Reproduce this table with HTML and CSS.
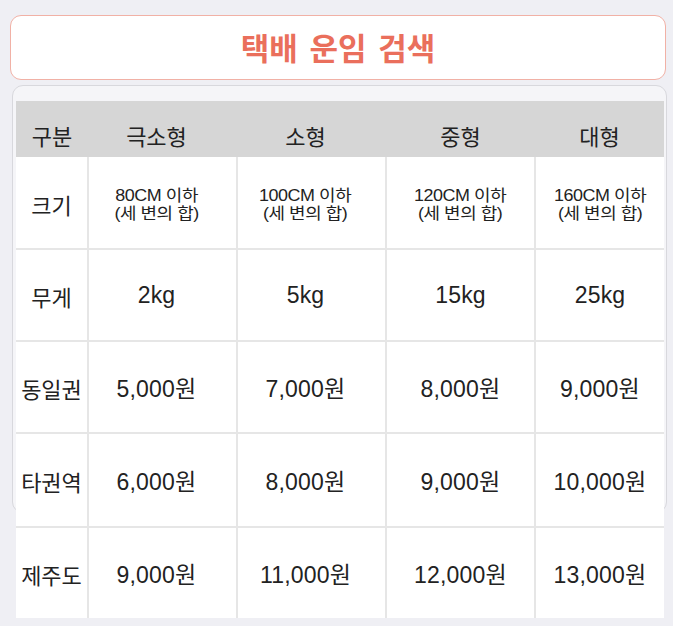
FILE: index.html
```html
<!DOCTYPE html>
<html lang="ko">
<head>
<meta charset="utf-8">
<title>택배 운임 검색</title>
<link rel="stylesheet" href="styles.css">
</head>
<body>
<div class="page">
  <div class="title-btn">택배 운임 검색</div>
  <div class="card">
    <table class="rates">
      <colgroup>
        <col class="c-label">
        <col class="c-data">
        <col class="c-data">
        <col class="c-data">
        <col class="c-last">
      </colgroup>
      <thead>
        <tr><th>구분</th><th>극소형</th><th>소형</th><th>중형</th><th>대형</th></tr>
      </thead>
      <tbody>
        <tr class="r-size">
          <td class="label">크기</td>
          <td><span class="size">80CM 이하<br>(세 변의 합)</span></td>
          <td><span class="size">100CM 이하<br>(세 변의 합)</span></td>
          <td><span class="size">120CM 이하<br>(세 변의 합)</span></td>
          <td><span class="size">160CM 이하<br>(세 변의 합)</span></td>
        </tr>
        <tr class="r-std">
          <td class="label">무게</td><td>2kg</td><td>5kg</td><td>15kg</td><td>25kg</td>
        </tr>
        <tr class="r-std">
          <td class="label">동일권</td><td>5,000원</td><td>7,000원</td><td>8,000원</td><td>9,000원</td>
        </tr>
        <tr class="r-tall">
          <td class="label">타권역</td><td>6,000원</td><td>8,000원</td><td>9,000원</td><td>10,000원</td>
        </tr>
        <tr class="r-last">
          <td class="label">제주도</td><td>9,000원</td><td>11,000원</td><td>12,000원</td><td>13,000원</td>
        </tr>
      </tbody>
    </table>
  </div>
</div>
</body>
</html>
```
FILE: styles.css
```css
html, body {
  margin: 0;
  padding: 0;
  background: #efeff4;
}
body {
  font-family: "Liberation Sans", "Noto Sans CJK KR", sans-serif;
  color: #222;
}
.page {
  padding: 15px 6px 0 10px;
  height: 626px;
  box-sizing: border-box;
  overflow: hidden;
}
.title-btn {
  width: 656px;
  height: 65px;
  box-sizing: border-box;
  background: #fff;
  border: 1.5px solid #f1b1a6;
  border-radius: 11px;
  display: flex;
  align-items: center;
  justify-content: center;
  font-family: "Noto Sans CJK KR", sans-serif;
  font-weight: 700;
  font-size: 31px;
  word-spacing: 3px;
  color: #ea6f5c;
  padding-bottom: 2px;
}
.card {
  margin: 5px 0 0 2px;
  width: 655px;
  height: 428px;
  box-sizing: border-box;
  background: #f5f5f8;
  border: 1px solid #d8d8dd;
  border-radius: 11px;
  padding: 15px 0 0 3px;
}
.rates {
  border-collapse: collapse;
  table-layout: fixed;
  width: 648px;
  background: #fff;
  font-size: 23px;
}
.c-label { width: 72px; }
.c-data { width: 149px; }
.c-last { width: 129px; }
.rates thead tr { height: 56px; }
.rates th {
  background: #d6d6d6;
  font-weight: 400;
  font-size: 22px;
  padding: 12px 0 0;
  border: none;
  font-family: "Noto Sans CJK KR", sans-serif;
}
.rates td {
  padding: 0;
  text-align: center;
  vertical-align: middle;
  border: 2px solid #e6e6e6;
  border-top: none;
  letter-spacing: 0.2px;
}
.rates tr > td:first-child { border-left: none; }
.rates tr > td:last-child { border-right: none; }
.rates th:nth-child(2), .rates th:nth-child(3),
.rates td:nth-child(2), .rates td:nth-child(3) {
  padding-right: 12px;
}
.rates td.label {
  font-family: "Noto Sans CJK KR", sans-serif;
  font-size: 22px;
  letter-spacing: 0;
  padding-top: 2px;
}
.r-size { height: 92px; }
.r-std { height: 92px; }
.r-tall { height: 94px; }
.r-last { height: 91px; }
.r-last td { border-bottom: none; }
.r-size td { padding-top: 6px; }
.size {
  display: inline-block;
  font-size: 16px;
  line-height: 18px;
  letter-spacing: -0.4px;
  transform: scaleX(1.12);
}
```
